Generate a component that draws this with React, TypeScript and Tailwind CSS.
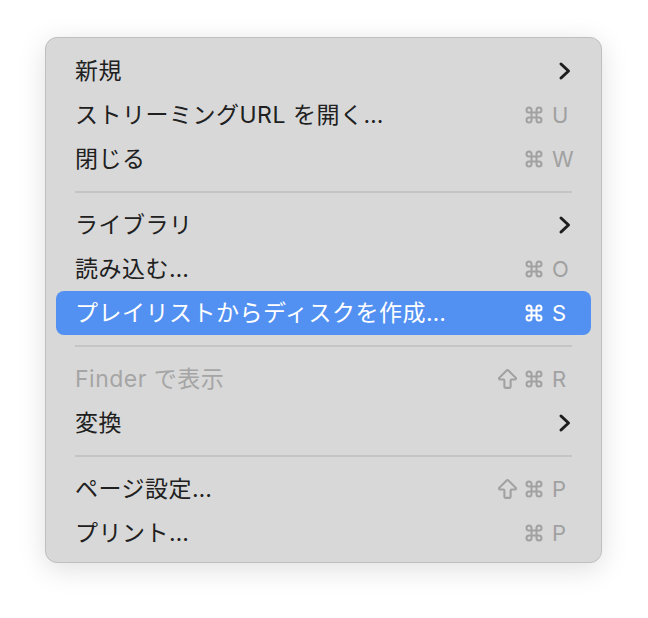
import { ArrowBigUp, Command } from 'lucide-react'

type Item = {
  label: string
  keys?: string
  shift?: boolean
  submenu?: boolean
  disabled?: boolean
  active?: boolean
}

const GROUPS: Item[][] = [
  [
    { label: '新規', submenu: true },
    { label: 'ストリーミングURL を開く…', keys: 'U' },
    { label: '閉じる', keys: 'W' },
  ],
  [
    { label: 'ライブラリ', submenu: true },
    { label: '読み込む…', keys: 'O' },
    { label: 'プレイリストからディスクを作成…', keys: 'S', active: true },
  ],
  [
    { label: 'Finder で表示', keys: 'R', shift: true, disabled: true },
    { label: '変換', submenu: true },
  ],
  [
    { label: 'ページ設定…', keys: 'P', shift: true },
    { label: 'プリント…', keys: 'P' },
  ],
]

function Chevron() {
  return (
    <svg width="14" height="20" viewBox="0 0 14 20" fill="none" className="text-[#1d1d1d] mr-[1px]">
      <path d="M3 3l7.5 7-7.5 7" stroke="currentColor" strokeWidth="3" strokeLinecap="round" strokeLinejoin="round" />
    </svg>
  )
}

function MenuRow({ item }: { item: Item }) {
  const dim = item.active ? 'text-white' : 'text-[#a1a1a1]'
  return (
    <div
      className={`flex items-center h-[44px] pl-[19px] pr-[18px] rounded-[8px] ${
        item.active ? 'bg-[#5290f1] text-white' : item.disabled ? 'text-[#a5a5a5]' : 'text-[#202020]'
      }`}
    >
      <span className="flex-1 whitespace-nowrap tracking-[0.5px]">{item.label}</span>
      {item.submenu && <Chevron />}
      {item.keys && (
        <div className={`flex items-center text-[22px] ${dim}`}>
          {item.shift && <ArrowBigUp className="w-[25px] h-[25px] mr-[4px]" strokeWidth={2} />}
          <Command className="w-[20px] h-[20px]" strokeWidth={2.4} />
          <span className="w-[29px] pl-[8px] leading-none">{item.keys}</span>
        </div>
      )}
    </div>
  )
}

export default function App() {
  return (
    <div
      className="w-[648px] h-[618px] bg-white pt-[37px] pl-[45px]"
      style={{ fontFamily: 'Inter, "Noto Sans CJK JP", sans-serif' }}
    >
      <div className="w-[557px] h-[526px] bg-[#d8d8d8] border border-[#bfbfbf] rounded-[12px] shadow-[0_6px_28px_rgba(0,0,0,0.13)] px-[10px] pt-[11px] text-[23px]">
        {GROUPS.map((group, gi) => (
          <div key={gi}>
            {gi > 0 && (
              <div className="h-[22px] flex items-center px-[19px]">
                <div className="h-[2px] w-full bg-[#c5c5c5]" />
              </div>
            )}
            {group.map((item) => (
              <MenuRow key={item.label} item={item} />
            ))}
          </div>
        ))}
      </div>
    </div>
  )
}
